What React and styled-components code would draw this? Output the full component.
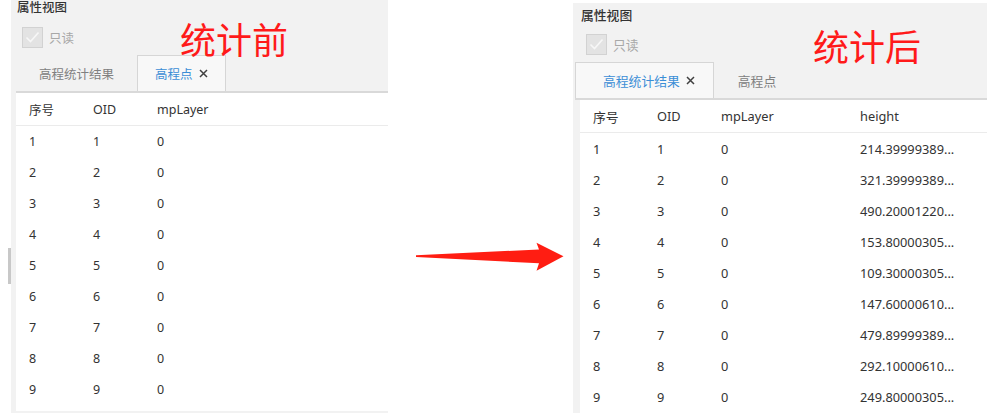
import React from "react";
import styled, { createGlobalStyle } from "styled-components";

const GlobalStyle = createGlobalStyle`
  html, body {
    margin: 0;
    padding: 0;
    background: #ffffff;
  }
  body {
    font-family: "Noto Sans", "Noto Sans CJK SC", sans-serif;
  }
`;

const Page = styled.div`
  display: flex;
  width: 1000px;
  height: 413px;
  overflow: hidden;
  background: #ffffff;
`;

const Gutter = styled.div`
  width: 11px;
  flex-shrink: 0;
  padding-top: 248px;
  box-sizing: border-box;
`;

const Thumb = styled.div`
  width: 3px;
  height: 36px;
  margin-left: 8px;
  background: #c8c8c8;
`;

const Panel = styled.div`
  position: relative;
  display: flex;
  flex-direction: column;
  flex-shrink: 0;
  width: ${(p) => p.width}px;
  margin-top: ${(p) => p.top}px;
  height: calc(100% - ${(p) => p.top}px);
  padding-left: ${(p) => p.inset}px;
  padding-bottom: ${(p) => p.bottom}px;
  box-sizing: border-box;
  background: #f2f2f2;
  font-size: ${(p) => p.fs}px;
`;

const Title = styled.div`
  height: 24px;
  line-height: 24px;
  padding-left: 1px;
  color: #333333;
  font-weight: 500;
`;

const ReadOnlyRow = styled.div`
  height: 35px;
  display: flex;
  align-items: center;
  gap: 6px;
  padding-left: 6px;
  color: #a8a8a8;
`;

const CheckBox = styled.div`
  width: 19px;
  height: 19px;
  background: #e3e3e3;
  border: 1px solid #d2d2d2;
  display: flex;
  align-items: center;
  justify-content: center;
`;

const Label = styled.div`
  position: absolute;
  left: ${(p) => p.x}px;
  top: 22px;
  font-family: "Noto Sans CJK SC", sans-serif;
  font-size: 36px;
  line-height: 40px;
  color: #ff1a1a;
  pointer-events: none;
`;

const TabBar = styled.div`
  display: flex;
  height: 38px;
  margin-left: ${(p) => p.shift}px;
  border-bottom: 2px solid #d9d9d9;
  box-sizing: border-box;
`;

const Tab = styled.div`
  display: flex;
  align-items: center;
  gap: 6px;
  padding: ${(p) => p.pad};
  color: ${(p) => (p.active ? "#3c8ed6" : "#808080")};
  background: ${(p) => (p.active ? "#f8f8f8" : "transparent")};
  border: 1px solid ${(p) => (p.active ? "#d6d6d6" : "transparent")};
  border-bottom: none;
`;

const Table = styled.div`
  flex: 1;
  background: #ffffff;
  color: #333333;
`;

const Row = styled.div`
  display: grid;
  grid-template-columns: 64px 64px 139px 1fr;
  align-items: center;
  padding-left: 13px;
  height: ${(p) => (p.head ? 33 : 31)}px;
  box-sizing: border-box;
  border-bottom: ${(p) => (p.head ? "1px solid #ebebeb" : "none")};
`;

const Middle = styled.div`
  width: 185px;
  flex-shrink: 0;
  padding-top: 236px;
  box-sizing: border-box;
`;

const Close = () => (
  <svg width="9" height="9" viewBox="0 0 9 9">
    <path d="M1 1L8 8M8 1L1 8" stroke="#404040" strokeWidth="1.5" />
  </svg>
);

const Check = () => (
  <svg width="17" height="17" viewBox="0 0 17 17">
    <path d="M2.5 8.5L6.5 12.5L14.5 3.5" stroke="#f7f7f7" strokeWidth="1.6" fill="none" />
  </svg>
);

const heights = [
  "214.39999389...",
  "321.39999389...",
  "490.20001220...",
  "153.80000305...",
  "109.30000305...",
  "147.60000610...",
  "479.89999389...",
  "292.10000610...",
  "249.80000305...",
];

const PropertyView = ({ label, labelX, withHeight, tabs, shift, ...rest }) => (
  <Panel {...rest}>
    <Title>属性视图</Title>
    <ReadOnlyRow>
      <CheckBox>
        <Check />
      </CheckBox>
      <span>只读</span>
    </ReadOnlyRow>
    <TabBar shift={shift}>
      {tabs.map((t) => (
        <Tab key={t.name} active={t.active} pad={t.pad}>
          {t.name}
          {t.active && <Close />}
        </Tab>
      ))}
    </TabBar>
    <Table>
      <Row head>
        <span>序号</span>
        <span>OID</span>
        <span>mpLayer</span>
        {withHeight && <span>height</span>}
      </Row>
      {heights.map((h, i) => (
        <Row key={i}>
          <span>{i + 1}</span>
          <span>{i + 1}</span>
          <span>0</span>
          {withHeight && <span>{h}</span>}
        </Row>
      ))}
    </Table>
    <Label x={labelX}>{label}</Label>
  </Panel>
);

const App = () => {
  return (
    <Page>
      <GlobalStyle />
      <Gutter>
        <Thumb />
      </Gutter>
      <PropertyView
        width={377}
        top={-4}
        inset={5}
        bottom={2}
        fs={12.5}
        shift={0}
        label="统计前"
        labelX={169}
        tabs={[
          { name: "高程统计结果", pad: "0 22px" },
          { name: "高程点", active: true, pad: "0 17px" },
        ]}
      />
      <Middle>
        <svg width="185" height="40" viewBox="0 0 185 40">
          <polygon
            points="28,19.3 151,13.5 148.5,6.7 175.5,20.3 148.5,34.7 151,27.3 28,21"
            fill="#ff1d12"
          />
        </svg>
      </Middle>
      <PropertyView
        width={414}
        top={3}
        inset={7}
        bottom={0}
        fs={12.8}
        shift={-5}
        label="统计后"
        labelX={240}
        withHeight
        tabs={[
          { name: "高程统计结果", active: true, pad: "0 18px 0 27px" },
          { name: "高程点", pad: "0 23px" },
        ]}
      />
    </Page>
  );
};

export default App;
